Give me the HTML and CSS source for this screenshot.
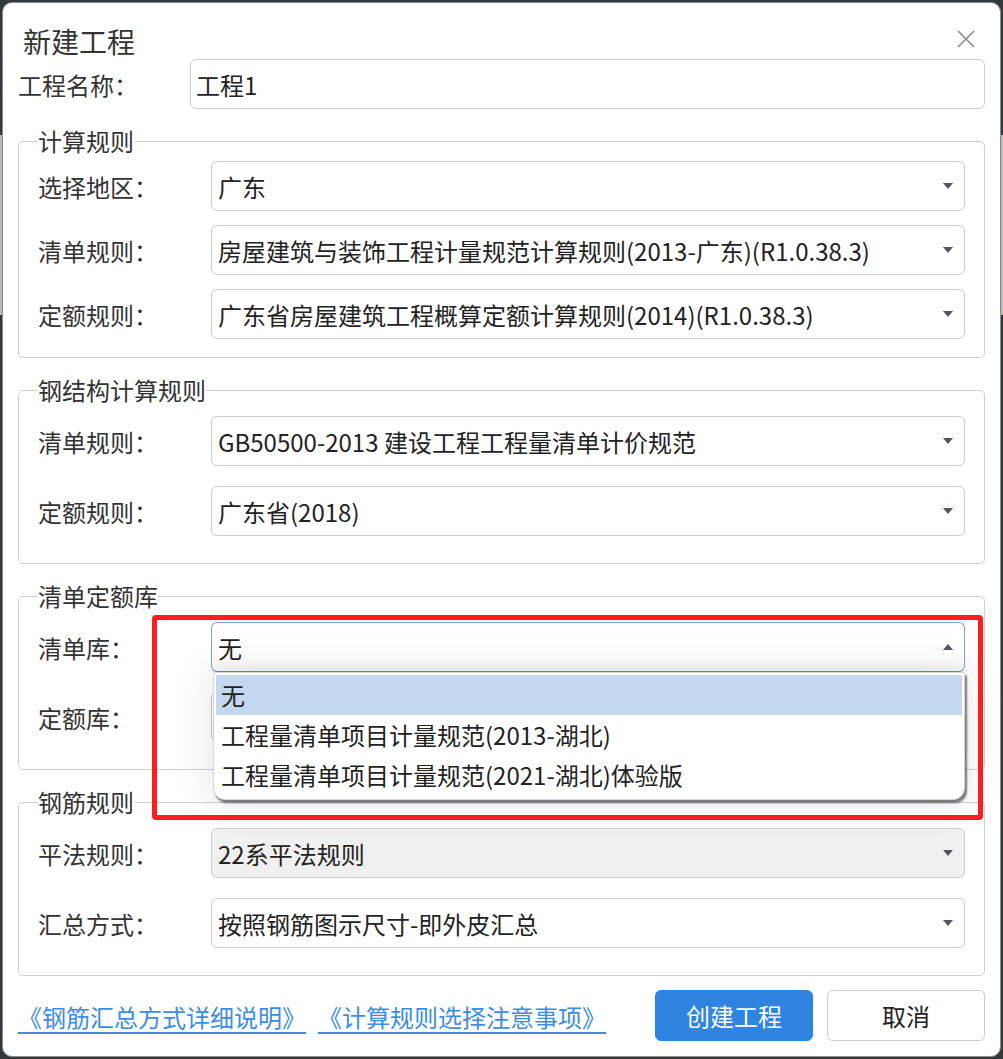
FILE: index.html
```html
<!DOCTYPE html>
<html lang="zh-CN">
  <head>
    <meta charset="UTF-8" />
    <meta name="viewport" content="width=device-width, initial-scale=1.0" />
    <title>新建工程</title>
    <link rel="stylesheet" href="styles.css">
  </head>
  <body>
    <div class="dialog">
      <div class="dialog-header">
        <h1 class="dialog-title">新建工程</h1>
        <button class="close-btn" type="button" aria-label="关闭">
          <svg width="18" height="18" viewBox="0 0 18 18">
            <path d="M1 1 L17 17 M17 1 L1 17" stroke="#8a8a8a" stroke-width="1.6" fill="none" />
          </svg>
        </button>
      </div>

      <div class="name-row">
        <label>工程名称：</label>
        <div class="text-input">工程1</div>
      </div>

      <fieldset class="group group-tight">
        <legend>计算规则</legend>
        <div class="row">
          <label>选择地区：</label>
          <div class="combo"><span>广东</span><i class="arrow"></i></div>
        </div>
        <div class="row">
          <label>清单规则：</label>
          <div class="combo"><span>房屋建筑与装饰工程计量规范计算规则(2013-广东)(R1.0.38.3)</span><i class="arrow"></i></div>
        </div>
        <div class="row">
          <label>定额规则：</label>
          <div class="combo"><span>广东省房屋建筑工程概算定额计算规则(2014)(R1.0.38.3)</span><i class="arrow"></i></div>
        </div>
      </fieldset>

      <fieldset class="group">
        <legend>钢结构计算规则</legend>
        <div class="row">
          <label>清单规则：</label>
          <div class="combo"><span>GB50500-2013 建设工程工程量清单计价规范</span><i class="arrow"></i></div>
        </div>
        <div class="row">
          <label>定额规则：</label>
          <div class="combo"><span>广东省(2018)</span><i class="arrow"></i></div>
        </div>
      </fieldset>

      <fieldset class="group">
        <legend>清单定额库</legend>
        <div class="row">
          <label>清单库：</label>
          <div class="combo combo-open">
            <span>无</span><i class="arrow arrow-up"></i>
            <ul class="dropdown">
              <li class="selected">无</li>
              <li>工程量清单项目计量规范(2013-湖北)</li>
              <li>工程量清单项目计量规范(2021-湖北)体验版</li>
            </ul>
          </div>
        </div>
        <div class="row">
          <label>定额库：</label>
          <!-- covered by the open list above -->
          <div class="combo"><span></span><i class="arrow"></i></div>
        </div>
      </fieldset>

      <fieldset class="group">
        <legend>钢筋规则</legend>
        <div class="row">
          <label>平法规则：</label>
          <div class="combo combo-disabled"><span>22系平法规则</span><i class="arrow"></i></div>
        </div>
        <div class="row">
          <label>汇总方式：</label>
          <div class="combo"><span>按照钢筋图示尺寸-即外皮汇总</span><i class="arrow"></i></div>
        </div>
      </fieldset>

      <div class="dialog-footer">
        <div class="links">
          <a href="#">《钢筋汇总方式详细说明》</a>
          <a href="#">《计算规则选择注意事项》</a>
        </div>
        <div class="buttons">
          <button type="button" class="btn btn-primary">创建工程</button>
          <button type="button" class="btn">取消</button>
        </div>
      </div>

      <div class="highlight-box"></div>
    </div>
  </body>
</html>
```

FILE: styles.css
```css
body {
  margin: 0;
  font-family: "Noto Sans CJK SC", "Noto Sans", sans-serif;
  color: #333;
  background: linear-gradient(to bottom, #33383d 0, #33383d 135px, #b9b9b9 135px, #b9b9b9 315px, #33383d 315px);
}

.dialog {
  position: relative;
  margin: 2px;
  width: 999px;
  box-sizing: border-box;
  background: #fff;
  border: 1px solid #8c8c8c;
  border-radius: 10px;
  padding: 0 15px 15px 15px;
  font-size: 24px;
}

.dialog-header {
  display: flex;
  justify-content: space-between;
  align-items: flex-end;
  height: 56px;
}

.dialog-title {
  margin: 0 0 0 5px;
  font-size: 28px;
  font-weight: normal;
  line-height: 36px;
  color: #333;
}

.close-btn {
  border: none;
  background: none;
  padding: 0;
  margin: 0 10px 11px 0;
  width: 18px;
  height: 18px;
  display: flex;
}

.name-row {
  display: grid;
  grid-template-columns: 172px 1fr;
  align-items: center;
}

.text-input {
  height: 50px;
  box-sizing: border-box;
  border: 1px solid #cdcdcd;
  border-radius: 6px;
  padding: 0 5px;
  display: flex;
  align-items: center;
  color: #222;
}

.group {
  margin: 18px 0 0 0;
  min-width: 0;
  border: 1px solid #cfcfcf;
  border-radius: 5px;
  padding: 12px 19px 27px 19px;
  display: flex;
  flex-direction: column;
  gap: 20px;
}

.group + .group {
  margin-top: 18px;
}

.group-tight {
  padding-top: 6px;
  padding-bottom: 18px;
  gap: 14px;
}

.group legend {
  padding: 0;
  line-height: 28px;
  font-size: 24px;
  color: #333;
}

.row {
  display: grid;
  grid-template-columns: 173px 1fr;
  align-items: center;
}

.combo {
  position: relative;
  height: 50px;
  box-sizing: border-box;
  border: 1px solid #cbcbcb;
  border-radius: 6px;
  padding: 0 11px 0 6px;
  display: flex;
  align-items: center;
  justify-content: space-between;
  color: #222;
  white-space: nowrap;
}

.combo-disabled {
  background: #f0f0f0;
}

.combo-open {
  border-color: #7f9fe0;
  border-bottom-color: #6a86bb;
  background: linear-gradient(to bottom, #fff 70%, #f6f6f6);
}

.arrow {
  width: 0;
  height: 0;
  border-left: 5px solid transparent;
  border-right: 5px solid transparent;
  border-top: 6px solid #4f5564;
}

.arrow-up {
  border-top: none;
  border-bottom: 6px solid #4f5564;
}

.dropdown {
  position: absolute;
  top: 100%;
  left: 1px;
  right: -1px;
  margin: 1px 0 0 0;
  padding: 2px 2px 4px 2px;
  list-style: none;
  background: #fff;
  border: 1px solid #d6d6d6;
  border-radius: 2px 2px 12px 12px;
  box-shadow: 2px 3px 2px rgba(0, 0, 0, 0.5), 0 0 40px rgba(0, 0, 0, 0.12);
  z-index: 2;
}

.dropdown li {
  height: 40px;
  line-height: 40px;
  padding-left: 5px;
  color: #222;
}

.dropdown li.selected {
  background: #c3d8ef;
}

.dialog-footer {
  margin-top: 14px;
  display: flex;
  justify-content: space-between;
  align-items: center;
}

.links {
  display: flex;
  gap: 12px;
  padding-top: 2px;
}

.links a {
  color: #3b8de6;
  text-decoration: underline;
  text-decoration-thickness: 2px;
  text-underline-offset: 5px;
}

.buttons {
  display: flex;
  gap: 14px;
}

.btn {
  width: 158px;
  height: 51px;
  font-family: inherit;
  font-size: 24px;
  border: 1px solid #cbcbcb;
  border-radius: 6px;
  background: #fff;
  color: #222;
}

.btn-primary {
  background: #2e84df;
  border-color: #2e84df;
  color: #fff;
}

.highlight-box {
  position: absolute;
  left: 149px;
  top: 612px;
  width: 831px;
  height: 205px;
  box-sizing: border-box;
  border: 5px solid #ff1e1e;
  border-radius: 4px;
  z-index: 3;
}
```
